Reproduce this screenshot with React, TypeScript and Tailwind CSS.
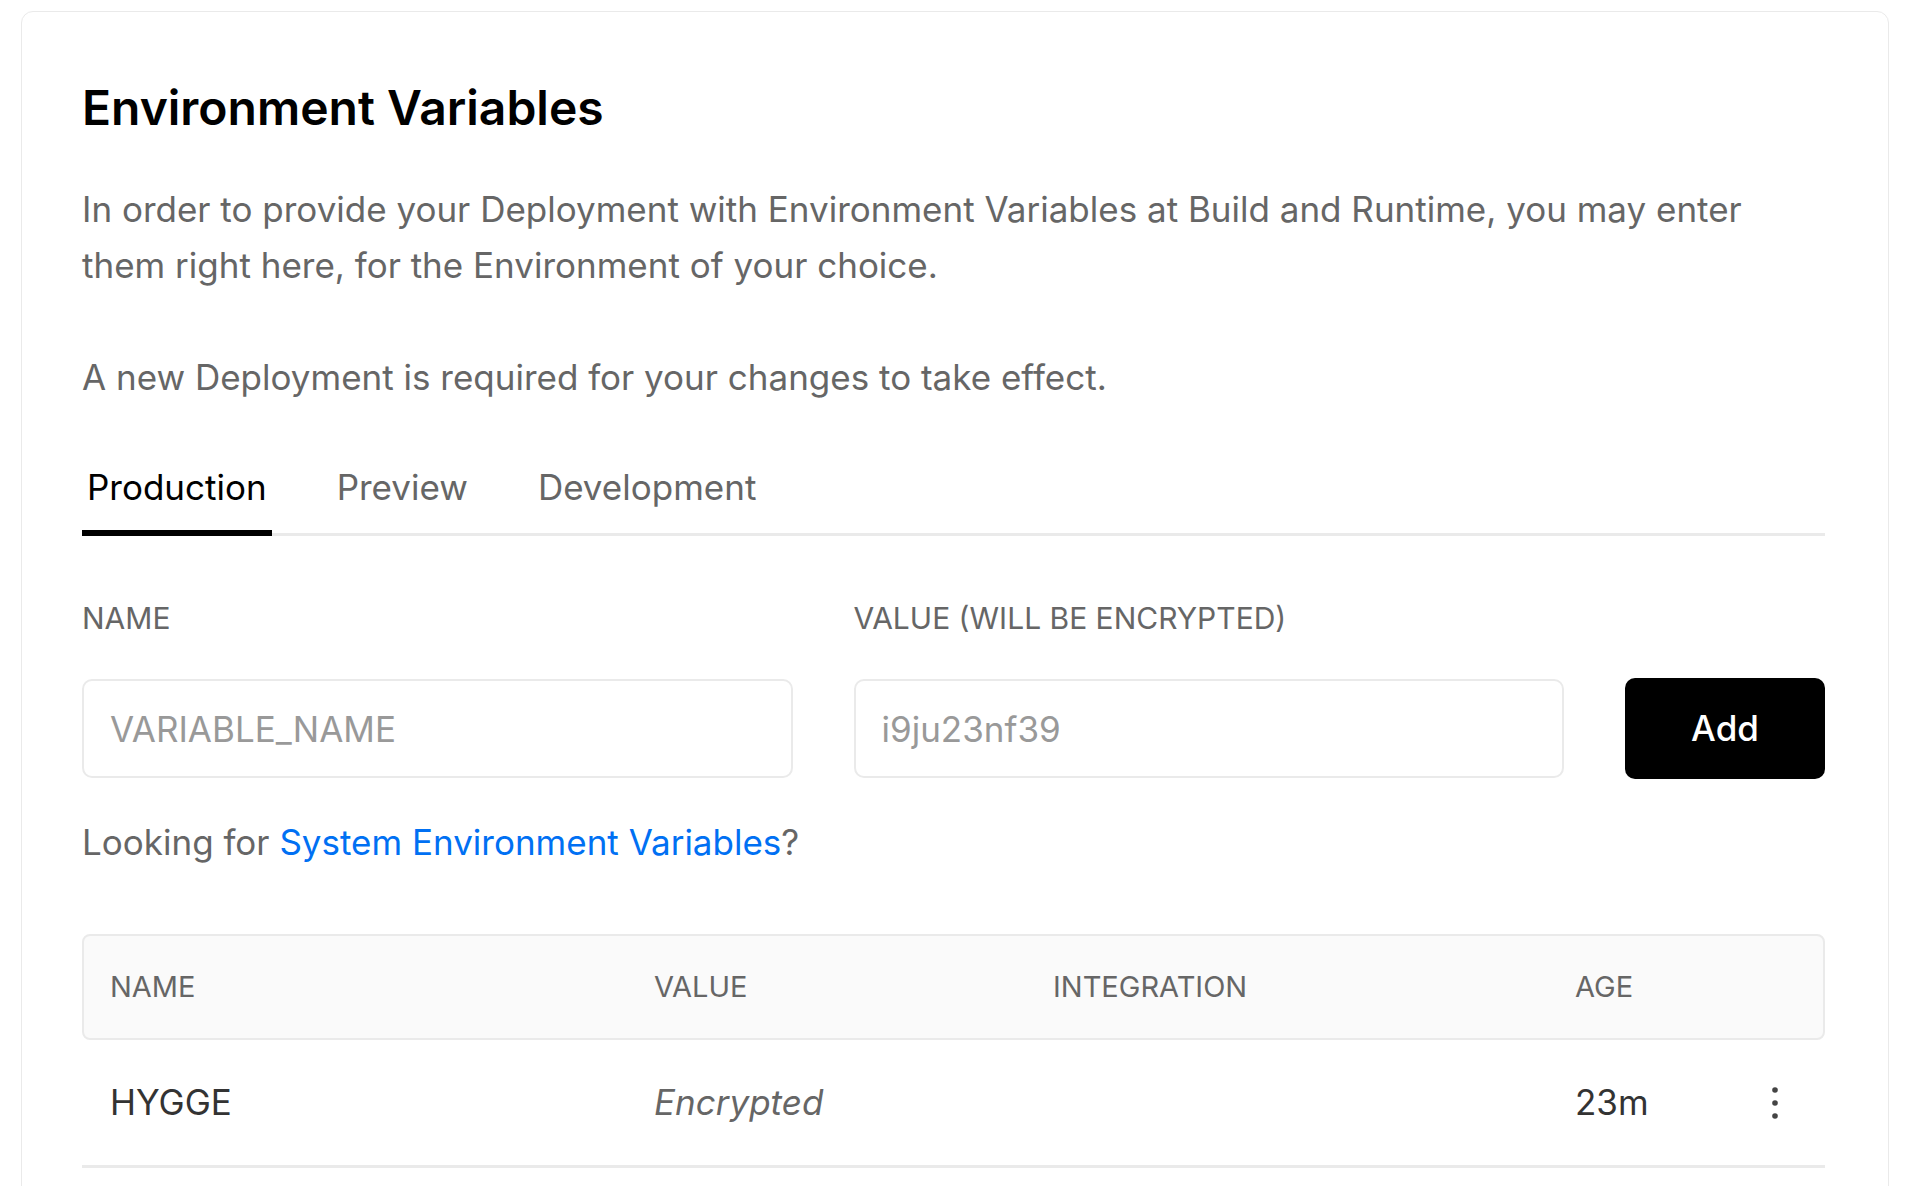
const tabs = ['Production', 'Preview', 'Development']

interface EnvVar {
  name: string
  value: string
  integration: string
  age: string
}

const vars: EnvVar[] = [{ name: 'HYGGE', value: 'Encrypted', integration: '', age: '23m' }]

function MoreIcon() {
  return (
    <svg width="12" height="40" viewBox="0 0 12 40" fill="#444">
      <circle cx="6" cy="7" r="2.8" />
      <circle cx="6" cy="20" r="2.8" />
      <circle cx="6" cy="33" r="2.8" />
    </svg>
  )
}

export default function App() {
  return (
    <div className="min-h-[1186px] w-full overflow-hidden bg-white font-['Inter',sans-serif] antialiased">
      <div className="ml-[21px] mt-[11px] h-[1200px] w-[1868px] rounded-t-[12px] border border-[#eaeaea] pl-[60px] pr-[63px] pt-[67px]">
        <h1 className="text-[48px] font-semibold leading-[58px] text-black">Environment Variables</h1>

        <p className="mt-[44px] text-[35px] leading-[56px] text-[#666]">
          In order to provide your Deployment with Environment Variables at Build and Runtime, you may enter
          them right here, for the Environment of your choice.
        </p>
        <p className="mt-[56px] text-[35px] leading-[56px] text-[#666]">
          A new Deployment is required for your changes to take effect.
        </p>

        <div className="mt-[54px] flex border-b-[3px] border-[#eaeaea]">
          {tabs.map((tab, i) => (
            <div
              key={tab}
              className={
                i === 0
                  ? '-mb-[3px] mr-[60px] border-b-[6px] border-black px-[5px] pb-[15px] text-[35px] leading-[56px] text-black'
                  : 'mr-[60px] px-[5px] pb-[18px] text-[35px] leading-[56px] text-[#666]'
              }
            >
              {tab}
            </div>
          ))}
        </div>

        <div className="mt-[62px] grid grid-cols-[1fr_1fr_200px] gap-x-[61px]">
          <label className="text-[30px] uppercase leading-[40px] text-[#666]">Name</label>
          <label className="text-[30px] uppercase leading-[40px] text-[#666]">Value (will be encrypted)</label>
          <div />
          <input
            placeholder="VARIABLE_NAME"
            className="mt-[41px] h-[99px] rounded-[10px] border-2 border-[#eaeaea] px-[26px] text-[35px] text-black outline-none placeholder:text-[#999]"
          />
          <input
            placeholder="i9ju23nf39"
            className="mt-[41px] h-[99px] rounded-[10px] border-2 border-[#eaeaea] px-[26px] text-[35px] text-black outline-none placeholder:text-[#999]"
          />
          <button className="mt-[40px] h-[101px] rounded-[10px] bg-black text-[35px] font-medium text-white">
            Add
          </button>
        </div>

        <p className="mt-[35px] text-[35px] leading-[56px] text-[#666]">
          Looking for <span className="text-[#0070f3]">System Environment Variables</span>?
        </p>

        <div className="mt-[64px]">
          <div className="grid h-[106px] grid-cols-[544px_399px_522px_1fr] items-center rounded-[8px] border-2 border-[#eaeaea] bg-[#fafafa] pl-[26px] text-[29px] uppercase text-[#666]">
            <span>Name</span>
            <span>Value</span>
            <span>Integration</span>
            <span>Age</span>
          </div>
          {vars.map(v => (
            <div
              key={v.name}
              className="grid h-[128px] grid-cols-[544px_399px_522px_1fr_80px] items-center border-b-[3px] border-[#eaeaea] pl-[28px] pr-[10px] text-[35px]"
            >
              <span className="text-[#333]">{v.name}</span>
              <span className="italic text-[#666]">{v.value}</span>
              <span>{v.integration}</span>
              <span className="text-[#333]">{v.age}</span>
              <span className="flex justify-center">
                <MoreIcon />
              </span>
            </div>
          ))}
        </div>
      </div>
    </div>
  )
}
